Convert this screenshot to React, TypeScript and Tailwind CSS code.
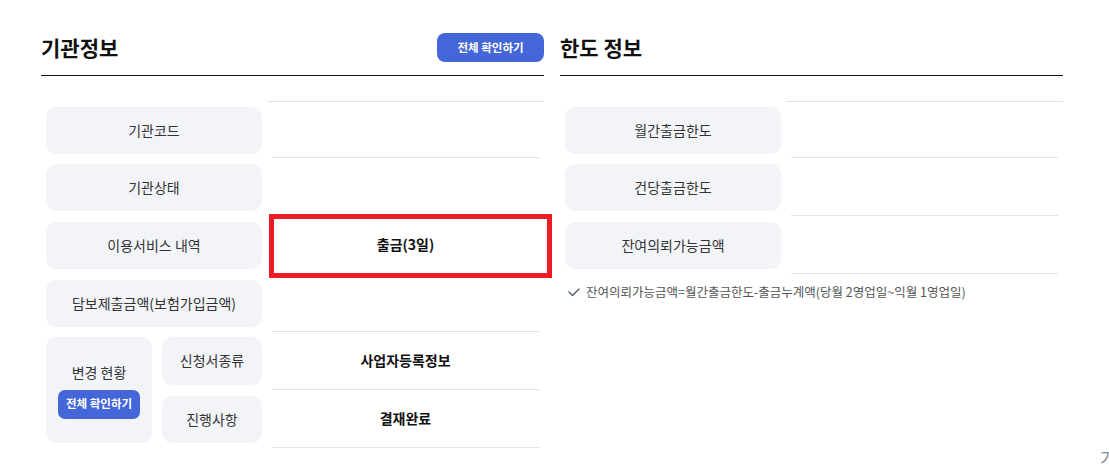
import type { ReactNode } from "react";

const Label = ({ children }: { children: ReactNode }) => (
  <div className="flex h-[47px] w-full items-center justify-center rounded-[10px] bg-[#f3f4f8] text-[14px] text-[#333]">
    {children}
  </div>
);

const Value = ({ children }: { children?: ReactNode }) => (
  <div className="flex h-full items-center justify-center border-b border-[#e2e2e2] text-[14px] font-bold text-[#111]">
    {children}
  </div>
);

interface RowProps {
  label: ReactNode;
  value?: ReactNode;
  first?: boolean;
  highlight?: boolean;
}

const Row = ({ label, value, first, highlight }: RowProps) => (
  <div className={`flex ${first ? "h-[56px]" : "h-[58px]"}`}>
    <div className="flex w-[226px] shrink-0 items-center px-[5px]">
      <Label>{label}</Label>
    </div>
    <div className="relative flex-1 px-[5px]">
      <Value>{value}</Value>
      {highlight && (
        <div className="pointer-events-none absolute -top-[2px] left-[2px] h-[64px] w-[283px] border-[5px] border-[#ec1c24]" />
      )}
    </div>
  </div>
);

const Header = ({ title, action }: { title: string; action?: boolean }) => (
  <div className="border-b border-[#111] pt-[33px] pb-[13px]">
    <div className="flex h-[29px] items-center justify-between">
      <h2 className="text-[21px] font-bold leading-none text-[#111]">{title}</h2>
      {action && (
        <button className="h-[29px] w-[107px] rounded-[8px] bg-[#4466d8] text-[11.5px] font-bold text-white">
          전체 확인하기
        </button>
      )}
    </div>
  </div>
);

const TopLine = () => (
  <div className="mt-[25px] flex">
    <div className="w-[226px] shrink-0" />
    <div className="flex-1 border-t border-[#e2e2e2]" />
  </div>
);

export default function App() {
  return (
    <div className="relative h-[467px] w-[1109px] overflow-hidden bg-white font-['Noto_Sans_CJK_KR','Noto_Sans',sans-serif]">
      <div className="flex gap-[16px] pl-[41px]">
        {/* 기관정보 */}
        <section className="w-[503px]">
          <Header title="기관정보" action />
          <TopLine />
          <Row first label="기관코드" />
          <Row label="기관상태" />
          <Row label="이용서비스 내역" value="출금(3일)" highlight />
          <Row label="담보제출금액(보험가입금액)" />

          {/* 변경 현황 */}
          <div className="flex h-[116px]">
            <div className="flex w-[226px] shrink-0 gap-[10px] p-[5px]">
              <div className="flex w-[106px] flex-col items-center justify-center gap-[8px] rounded-[10px] bg-[#f3f4f8]">
                <span className="text-[14px] leading-[20px] text-[#333]">변경 현황</span>
                <button className="h-[29px] w-[82px] rounded-[7px] bg-[#4466d8] text-[11.5px] font-bold text-white">
                  전체 확인하기
                </button>
              </div>
              <div className="flex flex-1 flex-col gap-[11px]">
                <div className="flex flex-1 items-center justify-center rounded-[10px] bg-[#f3f4f8] text-[14px] text-[#333]">
                  신청서종류
                </div>
                <div className="flex flex-1 items-center justify-center rounded-[10px] bg-[#f3f4f8] text-[14px] text-[#333]">
                  진행사항
                </div>
              </div>
            </div>
            <div className="flex flex-1 flex-col px-[5px]">
              <div className="h-[58px]">
                <Value>사업자등록정보</Value>
              </div>
              <div className="h-[58px]">
                <Value>결재완료</Value>
              </div>
            </div>
          </div>
        </section>

        {/* 한도 정보 */}
        <section className="w-[503px]">
          <Header title="한도 정보" />
          <TopLine />
          <Row first label="월간출금한도" />
          <Row label="건당출금한도" />
          <Row label="잔여의뢰가능금액" />
          <div className="mt-[9px] flex items-center gap-[6px] pl-[8px] text-[12.5px] leading-[18px] text-[#555]">
            <svg width="12" height="9" viewBox="0 0 12 9" fill="none" className="shrink-0">
              <polyline points="1,4 4.5,7.5 11,1" stroke="#5b6577" strokeWidth="1.5" strokeLinecap="round" strokeLinejoin="round" />
            </svg>
            <span>잔여의뢰가능금액=월간출금한도-출금누계액(당월 2영업일~익월 1영업일)</span>
          </div>
        </section>
      </div>

      {/* 화면 끝에 걸친 플로팅 텍스트 */}
      <span className="absolute left-[1100px] top-[449px] text-[17px] leading-none text-[#888]">가</span>
    </div>
  );
}
